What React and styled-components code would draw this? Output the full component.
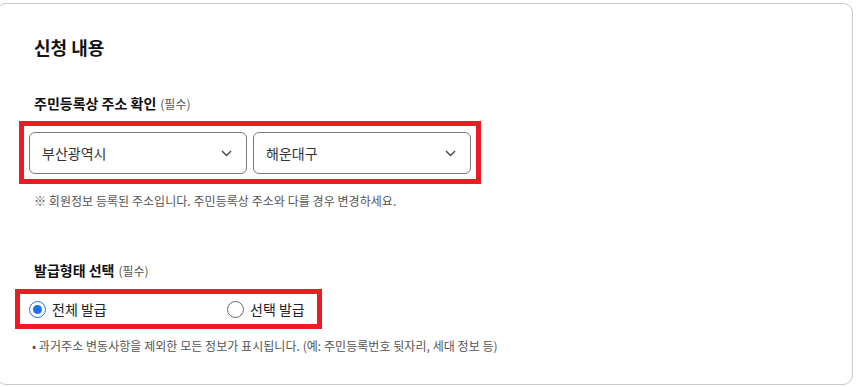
import React from "react";
import styled, { createGlobalStyle } from "styled-components";

const Global = createGlobalStyle`
  html, body { margin: 0; padding: 0; background: #fff; }
  body { font-family: "Noto Sans CJK KR", "Noto Sans", sans-serif; color: #222; overflow: hidden; }
  * { box-sizing: border-box; }
`;

const Card = styled.section`
  margin: 3px 0 0 -4px;
  width: 857px;
  height: 382px;
  border: 1px solid #c8c8c8;
  border-radius: 10px;
  padding: 30px 0 0 37px;
  background: #fff;
`;

const Title = styled.h2`
  margin: 0;
  font-size: 18px;
  font-weight: 700;
  line-height: 26px;
  color: #111;
`;

const Section = styled.div`
  margin-top: ${(p) => p.$top}px;
`;

const Label = styled.div`
  font-size: 14px;
  font-weight: 700;
  line-height: 20px;
  color: #111;
  display: flex;
  align-items: baseline;
  gap: 4px;
`;

const Required = styled.span`
  font-size: 12px;
  font-weight: 400;
  color: #555;
`;

const Highlight = styled.div`
  display: inline-flex;
  border: 5px solid #ed1c24;
  margin-left: ${(p) => p.$left}px;
  margin-top: ${(p) => p.$top}px;
  padding: ${(p) => p.$pad};
  gap: ${(p) => p.$gap}px;
  align-items: center;
`;

const Select = styled.div`
  width: 218px;
  height: 42px;
  border: 1px solid #7a7a7a;
  border-radius: 6px;
  display: flex;
  align-items: center;
  justify-content: space-between;
  padding: 0 14px 0 12px;
  font-size: 14px;
  color: #333;
`;

const Note = styled.p`
  margin: ${(p) => p.$top}px 0 0 ${(p) => p.$left}px;
  font-size: 12px;
  line-height: 18px;
  color: #555;
  letter-spacing: 0.05px;
`;

const RadioItem = styled.label`
  display: flex;
  align-items: center;
  gap: 6px;
  font-size: 14px;
  color: #222;
  width: ${(p) => p.$w}px;
`;

const Circle = styled.span`
  width: 17px;
  height: 17px;
  border-radius: 50%;
  border: ${(p) => (p.$on ? "1.5px solid #1a73e8" : "1px solid #666")};
  display: flex;
  align-items: center;
  justify-content: center;
  &::after {
    content: "";
    display: ${(p) => (p.$on ? "block" : "none")};
    width: 9px;
    height: 9px;
    border-radius: 50%;
    background: #1a73e8;
  }
`;

const Chevron = () => (
  <svg width="11" height="7" viewBox="0 0 11 7" fill="none">
    <path d="M1 1l4.5 4.5L10 1" stroke="#444" strokeWidth="1.4" />
  </svg>
);

export default function App() {
  return (
    <>
      <Global />
      <Card>
        <Title>신청 내용</Title>
        <Section $top={33}>
          <Label>
            주민등록상 주소 확인 <Required>(필수)</Required>
          </Label>
          <Highlight $left={-15} $top={7} $pad="6px 5px 5px 5px" $gap={6}>
            <Select>
              부산광역시 <Chevron />
            </Select>
            <Select>
              해운대구 <Chevron />
            </Select>
          </Highlight>
          <Note $top={8} $left={0}>
            ※ 회원정보 등록된 주소입니다. 주민등록상 주소와 다를 경우 변경하세요.
          </Note>
        </Section>
        <Section $top={50}>
          <Label>
            발급형태 선택 <Required>(필수)</Required>
          </Label>
          <Highlight $left={-19} $top={8} $pad="5px 10px 5px 9px" $gap={0}>
            <RadioItem $w={198}>
              <Circle $on />
              전체 발급
            </RadioItem>
            <RadioItem $w={80}>
              <Circle />
              선택 발급
            </RadioItem>
          </Highlight>
          <Note $top={8} $left={-2}>
            • 과거주소 변동사항을 제외한 모든 정보가 표시됩니다. (예: 주민등록번호 뒷자리, 세대 정보 등)
          </Note>
        </Section>
      </Card>
    </>
  );
}
